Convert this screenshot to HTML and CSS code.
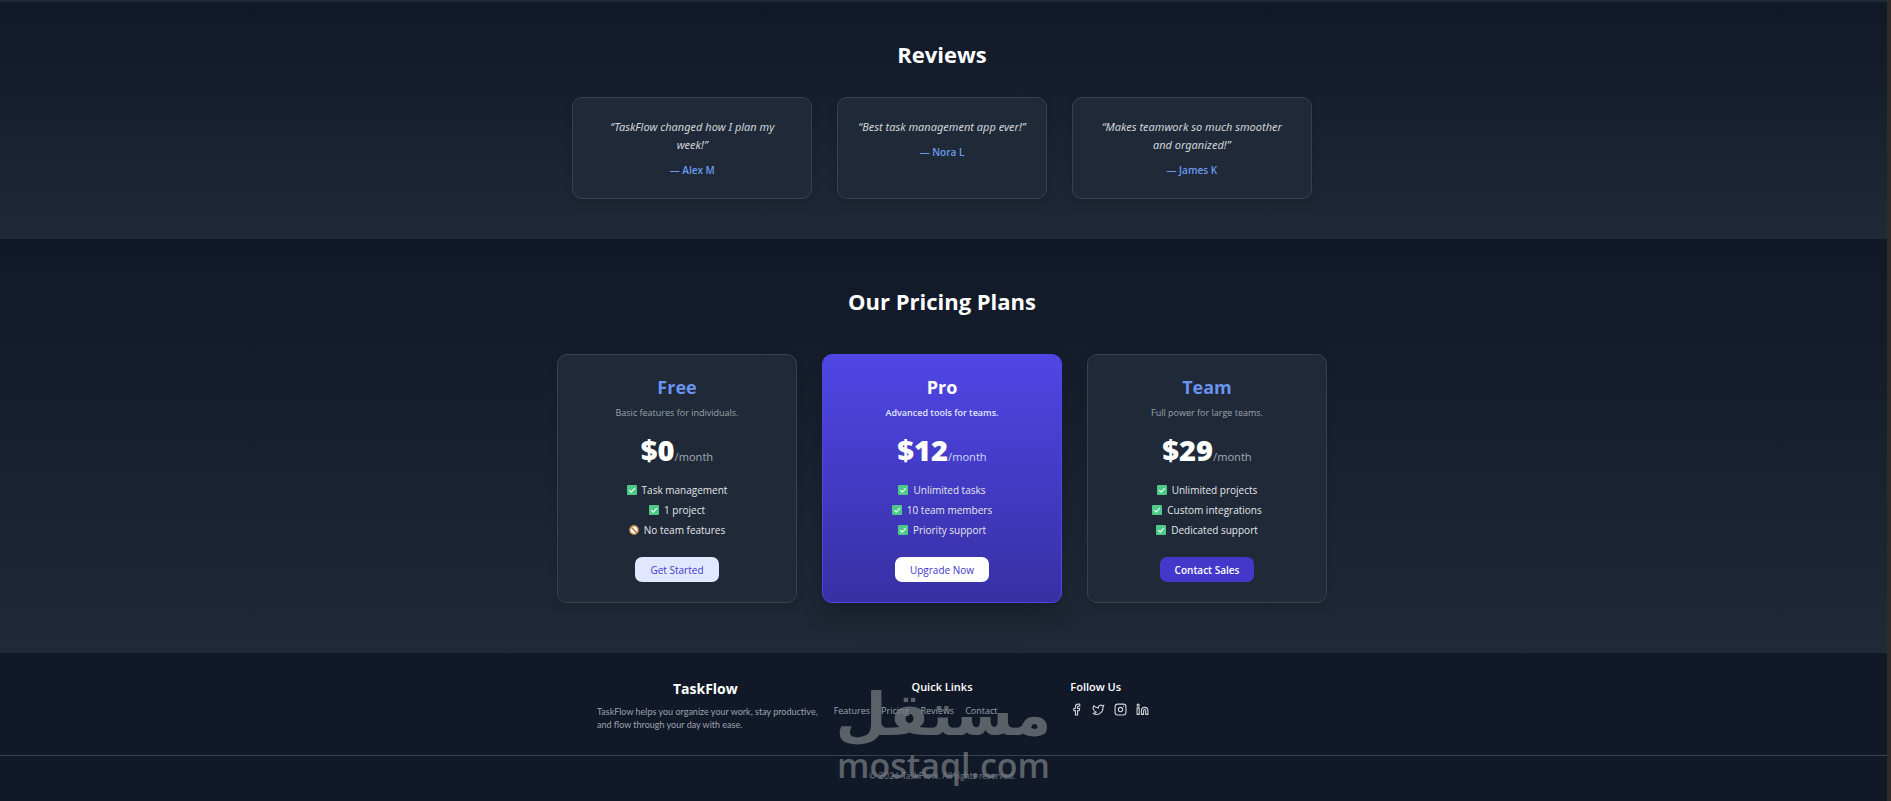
FILE: index.html
```html
<!DOCTYPE html>
<html lang="en">
<head>
  <meta charset="UTF-8" />
  <meta name="viewport" content="width=device-width, initial-scale=1.0"/>
  <title>TaskFlow</title>
  <link rel="stylesheet" href="styles.css">
</head>
<body>

<!-- Shared icons -->
<svg class="sprite" aria-hidden="true">
  <symbol id="check" viewBox="0 0 10 10">
    <rect width="10" height="10" rx="1" fill="#4fc98a"/>
    <path d="M2.3 5.2 4.2 7.1 7.9 3.2" fill="none" stroke="#eafff2" stroke-width="1.2"/>
  </symbol>
  <symbol id="none" viewBox="0 0 10 10">
    <circle cx="5" cy="5" r="4.2" fill="#fff" stroke="#c98a4b" stroke-width="1.4"/>
    <path d="M2.3 2.3 7.7 7.7" stroke="#b5733a" stroke-width="1.5"/>
  </symbol>
</svg>

<section class="reviews" id="reviews">
  <h2>Reviews</h2>
  <div class="review-list">
    <div class="review">
      <p class="quote">“TaskFlow changed how I plan my week!”</p>
      <p class="author">— Alex M</p>
    </div>
    <div class="review">
      <p class="quote">“Best task management app ever!”</p>
      <p class="author">— Nora L</p>
    </div>
    <div class="review">
      <p class="quote">“Makes teamwork so much smoother and organized!”</p>
      <p class="author">— James K</p>
    </div>
  </div>
</section>

<section class="pricing" id="pricing">
  <h2>Our Pricing Plans</h2>
  <div class="plan-list">
    <div class="plan">
      <h3>Free</h3>
      <p class="plan-desc">Basic features for individuals.</p>
      <p class="price">$0<span>/month</span></p>
      <ul>
        <li><svg><use href="#check"/></svg>Task management</li>
        <li><svg><use href="#check"/></svg>1 project</li>
        <li><svg><use href="#none"/></svg>No team features</li>
      </ul>
      <button class="btn btn-light">Get Started</button>
    </div>
    <div class="plan plan-pro">
      <h3>Pro</h3>
      <p class="plan-desc">Advanced tools for teams.</p>
      <p class="price">$12<span>/month</span></p>
      <ul>
        <li><svg><use href="#check"/></svg>Unlimited tasks</li>
        <li><svg><use href="#check"/></svg>10 team members</li>
        <li><svg><use href="#check"/></svg>Priority support</li>
      </ul>
      <button class="btn btn-white">Upgrade Now</button>
    </div>
    <div class="plan">
      <h3>Team</h3>
      <p class="plan-desc">Full power for large teams.</p>
      <p class="price">$29<span>/month</span></p>
      <ul>
        <li><svg><use href="#check"/></svg>Unlimited projects</li>
        <li><svg><use href="#check"/></svg>Custom integrations</li>
        <li><svg><use href="#check"/></svg>Dedicated support</li>
      </ul>
      <button class="btn btn-indigo">Contact Sales</button>
    </div>
  </div>
</section>

<footer>
  <div class="footer-grid">
    <div>
      <h3 class="brand">TaskFlow</h3>
      <p class="about">TaskFlow helps you organize your work, stay productive,<br>and flow through your day with ease.</p>
    </div>
    <div>
      <h4 class="links-title">Quick Links</h4>
      <ul class="links">
        <li><a href="#features">Features</a></li>
        <li><a href="#pricing">Pricing</a></li>
        <li><a href="#reviews">Reviews</a></li>
        <li><a href="#contact">Contact</a></li>
      </ul>
    </div>
    <div>
      <h4>Follow Us</h4>
      <div class="social">
        <a href="#" aria-label="Facebook"><svg viewBox="0 0 24 24"><path d="M18 2h-3a5 5 0 0 0-5 5v3H7v4h3v8h4v-8h3l1-4h-4V7a1 1 0 0 1 1-1h3z"/></svg></a>
        <a href="#" aria-label="Twitter"><svg viewBox="0 0 24 24"><path d="M22 4s-.7 2.1-2 3.400c1.600 10-9.400 17.300-18 11.600 2.200.1 4.400-.6 6-2C3 15.500.5 9.600 3 5c2.200 2.600 5.600 4.100 9 4-.9-4.200 4-6.600 7-3.800 1.100 0 3-1.200 3-1.200z"/></svg></a>
        <a href="#" aria-label="Instagram"><svg viewBox="0 0 24 24"><rect x="2" y="2" width="20" height="20" rx="5"/><circle cx="12" cy="12" r="4"/><path d="M17.500 6.500h.01"/></svg></a>
        <a href="#" aria-label="LinkedIn"><svg viewBox="0 0 24 24"><path d="M16 8a6 6 0 0 1 6 6v7h-4v-7a2 2 0 0 0-4 0v7h-4v-7a6 6 0 0 1 6-6z"/><rect x="2" y="9" width="4" height="12"/><circle cx="4" cy="4" r="2"/></svg></a>
      </div>
    </div>
  </div>
  <div class="copyright">© 2026 TaskFlow. All rights reserved.</div>
</footer>

<div class="watermark">
  <span class="watermark-ar" lang="ar">مستقل</span>
  <span class="watermark-en">mostaql.com</span>
</div>

</body>
</html>
```
FILE: styles.css
```css
* { box-sizing: border-box; margin: 0; padding: 0; }
html { background: #302a2b; }
body { position: relative; margin-right: 4px; min-height: 100vh; background: #111827; border-top: 2px solid #1f2937; color: white; font-family: "Open Sans", "Noto Sans", sans-serif; font-size: 10px; }
ul { list-style: none; }
a { color: inherit; text-decoration: none; }
.sprite { position: absolute; width: 0; height: 0; }

section { background: linear-gradient(to bottom, #111827, #1f2937); text-align: center; }
h2 { font-size: 22px; line-height: 30px; font-weight: 700; }

/* Reviews */
.reviews { padding: 37px 23px 40px 20px; }
.review-list { display: flex; justify-content: center; gap: 25px; margin-top: 28px; }
.review { max-width: 240px; padding: 20px; background: #1f2937; border: 1px solid #374151; border-radius: 10px; box-shadow: 0 4px 8px rgba(0,0,0,0.12); }
.quote { font-family: "Noto Sans", sans-serif; font-size: 11px; line-height: 18px; font-style: italic; color: #d1d5db; }
.author { margin-top: 8px; font-size: 10px; line-height: 16px; font-weight: 600; color: #6b9bf0; }

/* Pricing */
.pricing { padding: 47px 23px 50px 20px; }
.plan-list { display: flex; flex-wrap: wrap; justify-content: center; gap: 25px; margin-top: 38px; }
.plan { width: 240px; padding: 20px; background: #1f2937; border: 1px solid #374151; border-radius: 10px; box-shadow: 0 4px 8px rgba(0,0,0,0.12); }
.plan h3 { font-size: 18px; line-height: 24px; font-weight: 700; color: #6b93f0; }
.plan-desc { margin-top: 6px; font-size: 9px; line-height: 16px; color: #9ca3af; }
.price { margin-top: 13px; font-family: "Noto Sans", sans-serif; font-size: 29px; line-height: 32px; font-weight: 900; }
.price span { font-size: 11px; line-height: 16px; font-weight: 400; color: #9ca3af; }
.plan ul { display: grid; gap: 4px; margin-top: 16px; line-height: 16px; color: #e5e7eb; }
.plan li { display: flex; align-items: center; justify-content: center; gap: 5px; }
.plan li svg { width: 10px; height: 10px; }
.plan-pro { background: linear-gradient(to bottom, #4f46e5, #3730a3); border-color: #4f46e5; box-shadow: 0 16px 24px -4px rgba(0,0,0,0.25); }
.plan-pro h3 { color: white; }
.plan-pro .plan-desc { color: #e0e7ff; font-weight: 600; }
.plan-pro .price span { color: #c7d2fe; }
.btn { margin-top: 19px; padding: 0 15px; height: 25px; border: none; border-radius: 7px; font-family: inherit; font-size: 10px; font-weight: 500; cursor: pointer; vertical-align: top; }
.btn-light { background: #e0e7ff; color: #4338ca; }
.btn-white { background: white; color: #4338ca; }
.btn-indigo { background: #4338ca; color: white; font-weight: 600; }

/* Footer */
footer { padding-top: 25px; color: #9ca3af; }
.footer-grid { display: grid; grid-template-columns: repeat(3, minmax(0, 1fr)); gap: 20px; max-width: 693px; margin: 0 auto; padding-right: 3px; }
.brand { font-size: 14px; line-height: 22px; text-align: center; color: white; }
.about { margin-top: 5px; font-family: Lato, sans-serif; font-size: 9px; line-height: 13px; white-space: nowrap; }
h4 { font-size: 11px; line-height: 18px; font-weight: 600; color: white; }
.links-title { text-align: center; }
.links { display: flex; gap: 11px; margin-top: 7px; font-size: 9px; line-height: 16px; }
.social { display: flex; gap: 9px; margin-top: 7px; color: #d1d5db; }
.social svg { display: block; width: 13px; height: 13px; fill: none; stroke: currentColor; stroke-width: 2; stroke-linecap: round; stroke-linejoin: round; }
.copyright { margin-top: 24px; padding: 13px 3px 13px 0; border-top: 1px solid #374151; font-family: Lato, sans-serif; font-size: 9px; line-height: 13px; text-align: center; color: #6b7280; }

/* Watermark over the footer */
.watermark { position: absolute; bottom: 16px; left: 50%; transform: translateX(-50%); display: flex; flex-direction: column; align-items: center; color: #7b8084; opacity: 0.7; font-weight: 700; pointer-events: none; }
.watermark-ar { font-family: "DejaVu Sans", sans-serif; font-size: 59px; line-height: 60px; }
.watermark-en { font-family: "Open Sans", sans-serif; font-size: 34px; line-height: 40px; font-weight: 600; }
```
